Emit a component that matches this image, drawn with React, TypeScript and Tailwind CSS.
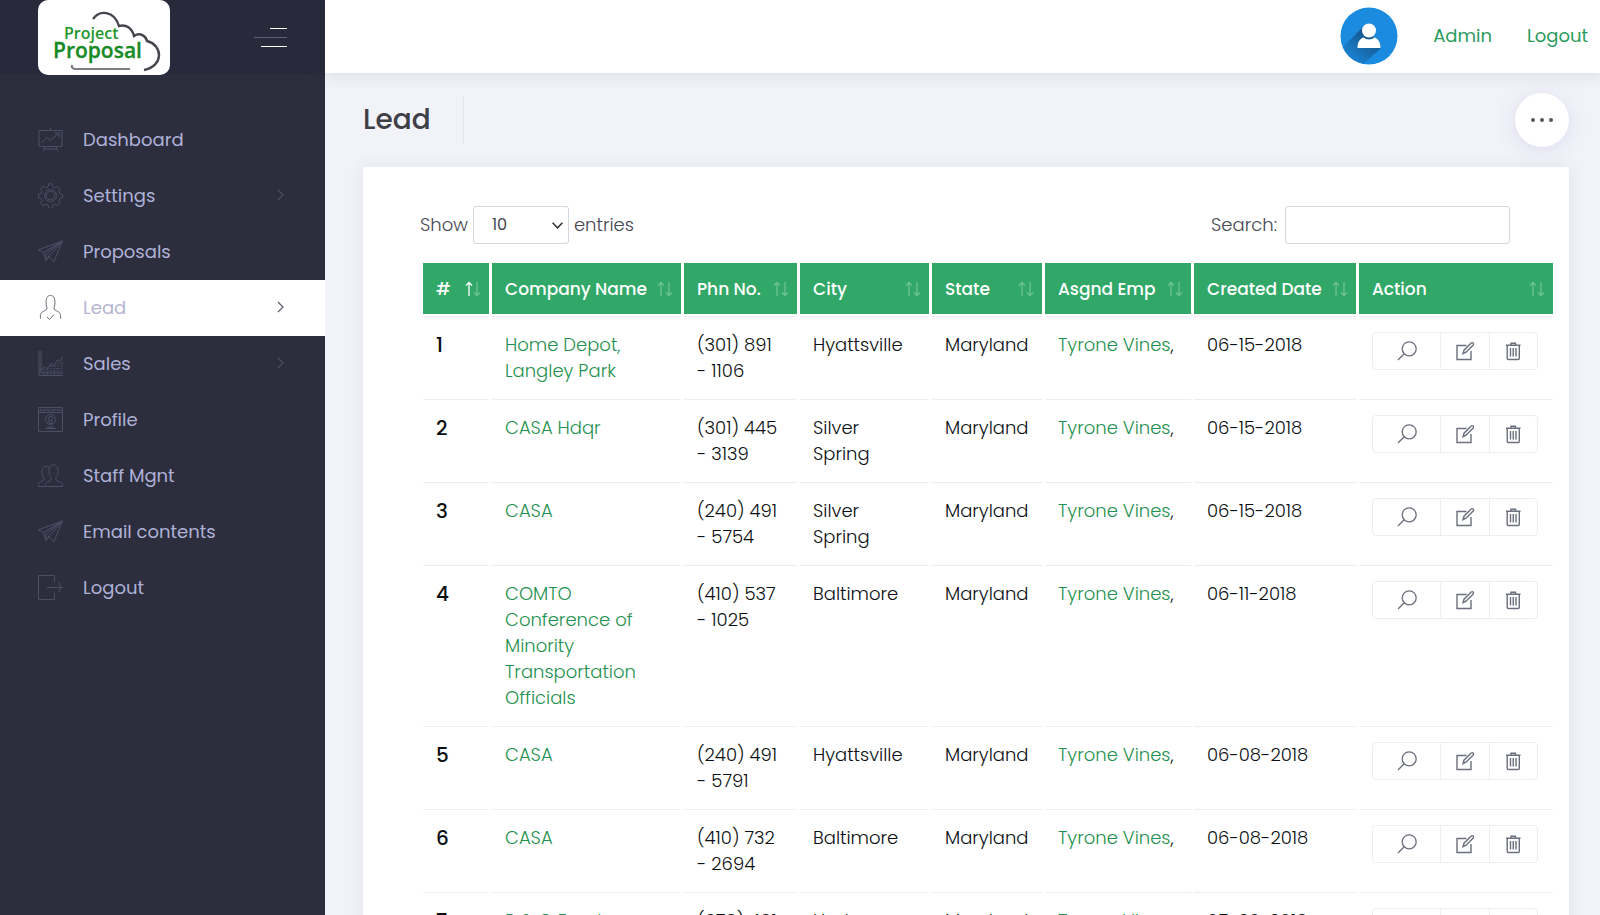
import React from "react";

type IconProps = { className?: string };

const svgProps = {
  viewBox: "0 0 25 25",
  width: 25,
  height: 25,
  fill: "none",
  stroke: "currentColor",
  strokeWidth: 1,
  "aria-hidden": true,
} as const;

const Presentation = () => (
  <svg {...svgProps}>
    <path d="M1 3.5h23v16H1zM12.500 1v2.500M7 19.500l-2 5M18 19.500l2 5M6 22h13M3.500 15.500l5.500-5 3 3 8.500-7M16.500 6h4.500v4.500" />
  </svg>
);
const Gear = () => (
  <svg {...svgProps}>
    <path d="M10.800.800h3.400l.8 3 2.300 1 2.700-1.600 2.400 2.400-1.600 2.700 1 2.300 2.700.700v3.400l-2.700.700-1 2.300 1.600 2.700-2.400 2.400-2.700-1.600-2.300 1-.8 3h-3.400l-.8-3-2.300-1L5 22.800l-2.400-2.400 1.600-2.700-1-2.300-2.700-.700v-3.400l2.700-.700 1-2.300L2.600 5.600 5 3.200l2.700 1.600 2.300-1z" />
    <circle cx="12.500" cy="12.500" r="6" />
    <circle cx="12.500" cy="12.500" r="4.200" />
  </svg>
);
const Plane = () => (
  <svg {...svgProps}>
    <path d="M24.500 2L.5 10.800l5 3zM24.500 2L5.500 13.800 8 21.500l3-4zM24.500 2L8 15.500v6M24.500 2L16 22.500l-6-5.500" />
  </svg>
);
const UserCheck = () => (
  <svg {...svgProps}>
    <path d="M2.500 23.500c-.5-4.500.5-6 3-7.200 2-1 3.500-1.300 3.500-3.300 0-1.500-1-2-.9-5C8 2.500 9.500.5 12.500.5S17 2.500 16.900 8c.1 3-.9 3.500-.9 5 0 2 1.500 2.300 3.500 3.300 2.500 1.200 3.500 2.700 3 7.200M9 22l2.500 2.500 4.500-5" />
  </svg>
);
const Chart = () => (
  <svg {...svgProps}>
    <path d="M1 0v24.500h24M3 0v22h22M1.500 20l5-4 2 2 5-6 2 3 4-6 2 1.500 3.500-5" />
    <path strokeDasharray="1 1.500" d="M5 20h20M8 17.500h17M12 15h13M17 12.500h8M6 18v6M9.500 18v6M13 14v10M16.500 15v9M20 12v12M24 6v18" />
  </svg>
);
const Browser = () => (
  <svg {...svgProps}>
    <path d="M.5.5h24v24H.5zM.5 5.500h24M12 3h12" />
    <circle cx="3" cy="3" r="1" />
    <circle cx="6.500" cy="3" r="1" />
    <circle cx="10" cy="3" r="1" />
    <circle cx="12.500" cy="12.500" r="5" />
    <circle cx="12.500" cy="11.500" r="2" />
    <path d="M11 13.500v3h3v-3M7 21.500h11M9 20h7" />
  </svg>
);
const Users = () => (
  <svg {...svgProps}>
    <path d="M7.500 23.500v-1.800c0-2 1.500-2.700 3.500-3.500 1.500-.6 2.200-1 2.200-2.500 0-1-2.200-2.500-2.200-7 0-4 1-6.700 4.500-6.700S20 4.700 20 8.700c0 4.500-2.200 6-2.200 7 0 1.500.7 1.900 2.200 2.500 2.500 1 4.500 1.500 4.500 3.800v1.500zM7.500 23.500h-7v-2c0-2 1.500-2.500 3.500-3.300 1.500-.6 2-1 2-2.200 0-1-2-2.300-2-6.300C4 6 5 3.500 8.200 3.500c1.500 0 2.300.5 2.800 1.200" />
  </svg>
);
const Exit = () => (
  <svg {...svgProps}>
    <path d="M16.500 7V.5H.5v24h16V18M9 12.500h15.500M21 7.500c0 3 1.500 4.500 3.500 5-2 .5-3.500 2-3.500 5" />
  </svg>
);

const Chevron = ({ className }: IconProps) => (
  <svg className={className} viewBox="0 0 7 12" width="7" height="12" fill="none" stroke="currentColor" strokeWidth="1.200" aria-hidden>
    <path d="M1 1l5 5-5 5" />
  </svg>
);

const Magnifier = () => (
  <svg viewBox="0 0 20 20" width="20" height="20" fill="none" stroke="currentColor" strokeWidth="1.300" aria-hidden>
    <circle cx="12.200" cy="7.800" r="7" />
    <path d="M7.200 12.800L1 19" />
  </svg>
);
const Edit = () => (
  <svg viewBox="0 0 20 20" width="20" height="20" fill="none" stroke="currentColor" strokeWidth="1.400" aria-hidden>
    <path d="M11.500 4.500H2v14h14V10" />
    <path d="M8 12.700l1-3.500 7.200-7.200c1.500-1 3 .6 2 2l-7.200 7.200z" />
  </svg>
);
const Trash = () => (
  <svg viewBox="0 0 20 20" width="20" height="20" fill="none" stroke="currentColor" strokeWidth="1.400" aria-hidden>
    <path d="M3 4.200h14.500M8 4V2.200h4.500V4M4.200 4.500v12.800q0 1.200 1.200 1.200h9.700q1.200 0 1.200-1.200V4.500M7.500 7v8.500M10.250 7v8.500M13 7v8.500" />
  </svg>
);

const Logo = () => (
  <svg viewBox="0 0 132 75" width="132" height="75" role="img" aria-label="Project Proposal">
    <path d="M55 19C61 10 76 10 81 26C88 24 94 28 96 36C102 32 108 36 109 41C125 45 126 66 106 70" fill="none" stroke="#45454d" strokeWidth="2.400" />
    <path d="M34 65q-1 4 4 4h54" fill="none" stroke="#7d7d83" strokeWidth="2.200" />
    <text x="26" y="39" fontSize="16" fontWeight="600" fill="#23962b" fontFamily="'Open Sans', sans-serif">Project</text>
    <text x="15" y="58" fontSize="21" fontWeight="600" fill="#168a25" stroke="#168a25" strokeWidth="0.300" fontFamily="'Open Sans', sans-serif">Proposal</text>
  </svg>
);

const Avatar = () => (
  <svg viewBox="0 0 58 58" width="58" height="58" role="img" aria-label="Admin avatar">
    <defs>
      <clipPath id="disc"><circle cx="29" cy="29" r="28.500" /></clipPath>
      <linearGradient id="shade" x1="1" y1="0" x2="0.200" y2="1">
        <stop offset="0.300" stopColor="#14588f" />
        <stop offset="1" stopColor="#1b8be0" />
      </linearGradient>
    </defs>
    <circle cx="29" cy="29" r="28.500" fill="#1b8be0" />
    <path clipPath="url(#disc)" d="M25 18L0 43v15h22l19-17z" fill="url(#shade)" />
    <circle cx="29" cy="23.500" r="7" fill="#fff" />
    <path d="M17.500 41c0-6 2.500-9.500 6-10.500 3.500 2.500 7.500 2.500 11 0 3.500 1 6 4.500 6 10.500z" fill="#fff" />
  </svg>
);

const menu = [
  { label: "Dashboard", icon: Presentation },
  { label: "Settings", icon: Gear, sub: true },
  { label: "Proposals", icon: Plane },
  { label: "Lead", icon: UserCheck, sub: true, active: true },
  { label: "Sales", icon: Chart, sub: true },
  { label: "Profile", icon: Browser },
  { label: "Staff Mgnt", icon: Users },
  { label: "Email contents", icon: Plane },
  { label: "Logout", icon: Exit },
];

const columns = [
  { label: "#", width: "w-[66px]" },
  { label: "Company Name", width: "w-[189px]" },
  { label: "Phn No.", width: "w-[113px]" },
  { label: "City", width: "w-[129px]" },
  { label: "State", width: "w-[110px]" },
  { label: "Asgnd Emp", width: "w-[146px]" },
  { label: "Created Date", width: "w-[162px]" },
  { label: "Action", width: "w-[194px]" },
];

const leads = [
  ["Home Depot, Langley Park", "(301) 891", "1106", "Hyattsville", "06-15-2018"],
  ["CASA Hdqr", "(301) 445", "3139", "Silver Spring", "06-15-2018"],
  ["CASA", "(240) 491", "5754", "Silver Spring", "06-15-2018"],
  ["COMTO Conference of Minority Transportation Officials", "(410) 537", "1025", "Baltimore", "06-11-2018"],
  ["CASA", "(240) 491", "5791", "Hyattsville", "06-08-2018"],
  ["CASA", "(410) 732", "2694", "Baltimore", "06-08-2018"],
  ["R & G Foods", "(678) 491", "2210", "Hudson", "05-30-2018"],
];

const SortArrows = ({ active }: { active: boolean }) => (
  <svg viewBox="0 0 16 16" width="16" height="16" fill="none" strokeWidth="1.300" aria-hidden className="shrink-0">
    <path d="M4 15V1.500M1 4.500l3-3 3 3" stroke="#fff" strokeOpacity={active ? 1 : 0.3} />
    <path d="M12 1v13.500M9 11.500l3 3 3-3" stroke="#fff" strokeOpacity={0.3} />
  </svg>
);

function Sidebar() {
  return (
    <aside className="flex w-[325px] shrink-0 flex-col bg-[#2c2e3e] font-normal">
      <div className="flex h-[75px] items-center justify-between bg-[#282a3c] pr-[38px] pl-[38px]">
        <a href="#" className="block overflow-hidden rounded-[10px] bg-white">
          <Logo />
        </a>
        <button type="button" aria-label="Toggle menu" className="flex flex-col items-end gap-2">
          <span className="h-px w-[17px] bg-white" />
          <span className="h-px w-[33px] bg-[#5d5f77]" />
          <span className="h-px w-[26px] bg-white" />
        </button>
      </div>
      <nav className="pt-[37px]">
        {menu.map(({ label, icon: Icon, sub, active }) => (
          <a
            key={label}
            href="#"
            className={`flex h-14 items-center pr-[41px] pb-[2px] pl-[38px] ${active ? "bg-white" : ""}`}
          >
            <span className={active ? "text-[#6b6c78]" : "text-[#4c4e65]"}>
              <Icon />
            </span>
            <span className={`ml-5 flex-1 text-[18px] ${active ? "text-[#b4b5d0]" : "text-[#afb2d8]"}`}>{label}</span>
            {sub && <Chevron className={active ? "text-[#5c5d68]" : "text-[#4c4e65]"} />}
          </a>
        ))}
      </nav>
    </aside>
  );
}

function LeadTable() {
  return (
    <table className="w-full table-fixed border-separate border-spacing-x-[3px] border-spacing-y-[2px] text-left text-[18px] leading-[26px] text-[#0c0f12]">
      <colgroup>
        {columns.map((c) => (
          <col key={c.label} className={c.width} />
        ))}
      </colgroup>
      <thead>
        <tr>
          {columns.map((c, i) => (
            <th key={c.label} scope="col" className="h-[51px] bg-[#31a868] pr-2 pl-[13px] text-[17px] font-medium text-white">
              <span className="flex items-center justify-between whitespace-nowrap">
                {c.label}
                <SortArrows active={i === 0} />
              </span>
            </th>
          ))}
        </tr>
      </thead>
      <tbody>
        {leads.map(([company, area, line, city, date], i) => (
          <tr key={i} className="align-top [&>*]:border-t [&>*]:border-[#ebedf2] [&>*]:pt-[15px] [&>*]:pb-[13px] [&>*]:pl-[13px]">
            <th scope="row" className="text-[20px] font-medium">{i + 1}</th>
            <td className="pr-6">
              <a href="#" className="text-[#1f9150]">{company}</a>
            </td>
            <td>
              {area}
              <br />- {line}
            </td>
            <td className="pr-10">{city}</td>
            <td>Maryland</td>
            <td className="whitespace-nowrap">
              <a href="#" className="text-[#1f9150]">Tyrone Vines</a>,
            </td>
            <td>{date}</td>
            <td>
              <div className="flex h-[38px] w-[166px] divide-x divide-[#ebedf2] rounded-[4px] border border-[#ebedf2] text-[#6c6f7d]">
                <button type="button" aria-label="View" className="flex w-[68px] items-center justify-center">
                  <Magnifier />
                </button>
                <button type="button" aria-label="Edit" className="flex flex-1 items-center justify-center">
                  <Edit />
                </button>
                <button type="button" aria-label="Delete" className="flex flex-1 items-center justify-center">
                  <Trash />
                </button>
              </div>
            </td>
          </tr>
        ))}
      </tbody>
    </table>
  );
}

export default function App() {
  return (
    <div className="flex h-screen overflow-hidden bg-[#f2f3f8] font-[Poppins,Inter,sans-serif] font-light">
      <Sidebar />
      <div className="flex min-w-0 flex-1 flex-col">
        <header className="flex h-[73px] shrink-0 items-center justify-end bg-white pr-3 pb-[2px] text-[18px] font-normal text-[#2a9c5d] shadow-[0_1px_15px_1px_rgba(69,65,78,0.12)]">
          <Avatar />
          <a href="#" className="ml-[35px]">Admin</a>
          <a href="#" className="ml-[35px]">Logout</a>
        </header>
        <main className="flex-1 pr-[31px] pl-[38px] pt-5">
          <div className="flex h-[54px] items-center justify-between">
            <h1 className="flex h-12 items-center border-r border-[#e2e5ec] pr-8 text-[28px] font-medium text-[#3f4047]">Lead</h1>
            <button
              type="button"
              aria-label="More actions"
              className="flex size-[54px] items-center justify-center gap-[5px] rounded-full bg-white shadow-[0_3px_20px_0_rgba(113,106,202,0.17)]"
            >
              <span className="size-[4px] rounded-full bg-[#575962]" />
              <span className="size-[4px] rounded-full bg-[#575962]" />
              <span className="size-[4px] rounded-full bg-[#575962]" />
            </button>
          </div>
          <section className="mt-5 bg-white pt-[39px] pr-[13px] pl-[57px] shadow-[0_1px_15px_1px_rgba(69,65,78,0.08)]">
            <div className="flex items-center justify-between pr-[46px] text-[18px] text-[#454750]">
              <label className="flex items-center gap-[5px]">
                <span className="pb-[2px]">Show</span>
                <span className="relative flex">
                  <select className="h-[38px] w-[96px] appearance-none rounded-[3px] border border-[#d4d6e0] bg-white pl-[18px] text-[16px] font-normal" defaultValue="10">
                    <option>10</option>
                    <option>25</option>
                    <option>50</option>
                    <option>100</option>
                  </select>
                  <svg className="pointer-events-none absolute top-4 right-[6px]" viewBox="0 0 11 7" width="11" height="7" fill="none" stroke="#33343a" strokeWidth="1.600" aria-hidden>
                    <path d="M.6.800l4.900 5 4.900-5" />
                  </svg>
                </span>
                <span className="pb-[2px]">entries</span>
              </label>
              <label className="flex items-center gap-2">
                <span className="pb-[2px]">Search:</span>
                <input type="search" className="h-[38px] w-[225px] rounded-[3px] border border-[#d4d6e0] px-3 text-[16px] outline-none" />
              </label>
            </div>
            <div className="pt-[17px]">
              <LeadTable />
            </div>
          </section>
        </main>
      </div>
    </div>
  );
}
